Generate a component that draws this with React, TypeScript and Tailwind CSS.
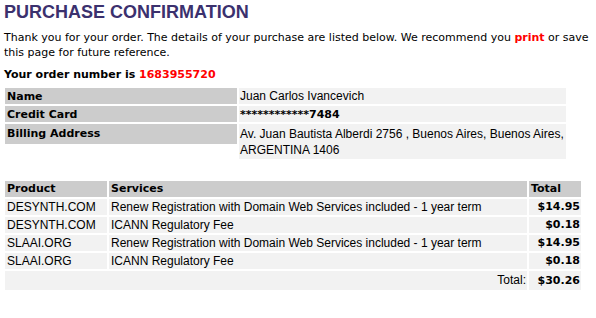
const verdana = 'font-["Verdana","DejaVu_Sans",sans-serif]'
const arial = 'font-["Arial","Liberation_Sans",sans-serif]'

const items = [
  { product: 'DESYNTH.COM', service: 'Renew Registration with Domain Web Services included - 1 year term', total: '$14.95' },
  { product: 'DESYNTH.COM', service: 'ICANN Regulatory Fee', total: '$0.18' },
  { product: 'SLAAI.ORG', service: 'Renew Registration with Domain Web Services included - 1 year term', total: '$14.95' },
  { product: 'SLAAI.ORG', service: 'ICANN Regulatory Fee', total: '$0.18' },
]

export default function App() {
  return (
    <div className="w-[596px] h-[318px] bg-white text-black px-[4px] overflow-hidden">
      {/* Heading */}
      <h1 className={`${arial} text-[18px] leading-[22px] font-bold text-[#3b316e] pt-[1px]`}>
        PURCHASE CONFIRMATION
      </h1>

      <p className={`${verdana} text-[11px] leading-[15px] mt-[7px]`}>
        Thank you for your order. The details of your purchase are listed below. We recommend you{' '}
        <span className="font-bold text-[#ff0000]">print</span> or save this page for future reference.
      </p>

      <p className={`${verdana} text-[11px] leading-[15px] font-bold mt-[7px]`}>
        Your order number is <span className="text-[#ff0000]">1683955720</span>
      </p>

      {/* Customer details */}
      <table className="mt-[4px] -ml-[1px] border-separate border-spacing-[2px]">
        <tbody>
          <tr>
            <td className="w-[232px] p-0 align-top">
              <div className={`${verdana} bg-[#cccccc] text-[11px] leading-[15px] font-bold px-[2px] h-[16px] pt-[1px]`}>Name</div>
            </td>
            <td className={`${arial} w-[327px] bg-[#f2f2f2] text-[12px] leading-[15px] px-[1px] h-[16px] pt-[1px] align-top`}>
              Juan Carlos Ivancevich
            </td>
          </tr>
          <tr>
            <td className="p-0 align-top">
              <div className={`${verdana} bg-[#cccccc] text-[11px] leading-[15px] font-bold px-[2px] h-[16px] pt-[1px]`}>Credit Card</div>
            </td>
            <td className={`${verdana} bg-[#f2f2f2] text-[11px] leading-[15px] font-bold px-[1px] h-[16px] pt-[1px] align-top`}>
              ************7484
            </td>
          </tr>
          <tr>
            <td className="p-0 align-top">
              <div className={`${verdana} bg-[#cccccc] text-[11px] leading-[15px] font-bold px-[2px] h-[20px] pt-[2px]`}>Billing Address</div>
            </td>
            <td className={`${arial} bg-[#f2f2f2] text-[12px] leading-[16px] px-[1px] pt-[2px] pb-[1px] align-top`}>
              Av. Juan Bautista Alberdi 2756 , Buenos Aires, Buenos Aires, ARGENTINA 1406
            </td>
          </tr>
        </tbody>
      </table>

      {/* Order items */}
      <table className="mt-[18px] -ml-[1px] border-separate border-spacing-[2px]">
        <thead>
          <tr className={`${verdana} bg-[#cccccc] text-[11px] leading-[16px] font-bold text-left`}>
            <th className="w-[102px] px-[2px] bg-[#cccccc]">Product</th>
            <th className="w-[418px] px-[2px] bg-[#cccccc]">Services</th>
            <th className="w-[52px] px-[2px] bg-[#cccccc]">Total</th>
          </tr>
        </thead>
        <tbody>
          {items.map((item, i) => (
            <tr key={i}>
              <td className={`${arial} bg-[#f2f2f2] text-[12px] leading-[16px] px-[2px]`}>{item.product}</td>
              <td className={`${arial} bg-[#f2f2f2] text-[12px] leading-[16px] px-[2px]`}>{item.service}</td>
              <td className={`${verdana} bg-[#f2f2f2] text-[11px] leading-[16px] font-bold text-right px-[1px]`}>{item.total}</td>
            </tr>
          ))}
          <tr>
            <td colSpan={2} className={`${arial} bg-[#f2f2f2] text-[12px] leading-[19px] text-right px-[1px]`}>Total:</td>
            <td className={`${verdana} bg-[#f2f2f2] text-[11px] leading-[19px] font-bold text-right px-[1px]`}>$30.26</td>
          </tr>
        </tbody>
      </table>
    </div>
  )
}
